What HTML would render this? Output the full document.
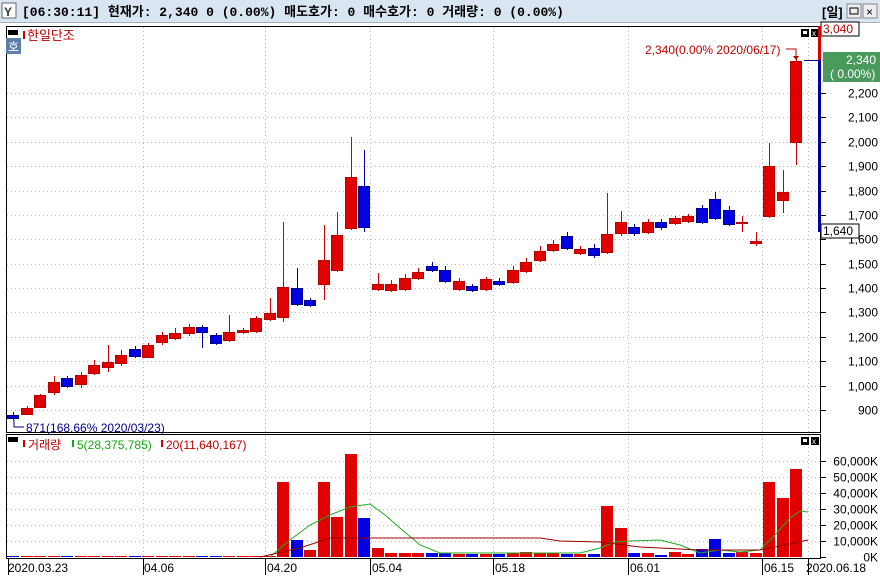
<!DOCTYPE html>
<html><head><meta charset="utf-8"><style>
body{margin:0;width:880px;height:578px;overflow:hidden;background:#fff;font-family:"Liberation Mono","Noto Sans CJK KR",monospace;}
svg text{font-family:"Liberation Sans","Noto Sans CJK KR",sans-serif;}
</style></head><body>
<svg id="s" width="880" height="578" xmlns="http://www.w3.org/2000/svg">
<rect x="0" y="0" width="880" height="22" fill="#d9e5f1"/>
<line x1="0" y1="22.5" x2="880" y2="22.5" stroke="#a0b0c0"/>
<rect x="2" y="3" width="14" height="15" fill="#fff" stroke="#666"/>
<text x="4" y="16" font-size="12" font-weight="bold" fill="#333">Y</text>
<text x="22" y="16" font-size="13" font-weight="bold" fill="#000" style="font-family:'Liberation Mono','Noto Sans CJK KR',monospace">[06:30:11] 현재가: 2,340  0  (0.00%)  매도호가: 0  매수호가: 0  거래량: 0  (0.00%)</text>
<text x="822" y="17" font-size="13" font-weight="bold" fill="#000">[일]</text>
<rect x="847" y="4" width="14" height="14" fill="#eee" stroke="#888"/><rect x="850" y="8" width="8" height="6" fill="none" stroke="#000"/>
<rect x="863" y="4" width="14" height="14" fill="#eee" stroke="#888"/><text x="866" y="16" font-size="12" fill="#000">×</text>
<g id="grid"></g>
<rect x="6.5" y="26.5" width="814" height="406" fill="none" stroke="#000"/>
<line x1="6" y1="434.5" x2="821" y2="434.5" stroke="#000"/>
<line x1="6.5" y1="434" x2="6.5" y2="558" stroke="#000"/>
<line x1="820.5" y1="434" x2="820.5" y2="558" stroke="#000"/>
<line x1="6" y1="558.5" x2="821" y2="558.5" stroke="#000"/>
<g id="c"></g>
<rect x="8" y="30" width="10" height="5" fill="#000"/>
<rect x="6" y="38" width="15" height="16" fill="#5a7fa8"/><text x="8" y="51" font-size="12" fill="#fff">호</text>
<rect x="23" y="31" width="2" height="8" fill="#c00"/><text x="27" y="40" font-size="13" fill="#b00">한일단조</text>
<rect x="801" y="29" width="8" height="8" fill="#000"/><rect x="803" y="31" width="4" height="3" fill="#fff"/>
<rect x="811" y="29" width="8" height="8" fill="#000"/><text x="812" y="36" font-size="8" fill="#fff">x</text>
<text x="645" y="54" font-size="12" fill="#b00">2,340(0.00% 2020/06/17)</text>
<path d="M786 49H796V58" stroke="#b00" fill="none"/><path d="M793 56L796 60L799 56Z" fill="#b00"/>
<text x="26" y="432" font-size="12" fill="#00008b">871(168.66% 2020/03/23)</text>
<path d="M14 420V427H24" stroke="#00008b" fill="none"/>
<rect x="8" y="437" width="10" height="5" fill="#000"/>
<rect x="23" y="440" width="2" height="7" fill="#c00"/><text x="28" y="449" font-size="12" fill="#b00">거래량</text>
<rect x="72" y="440" width="2" height="7" fill="#1a1"/><text x="77" y="449" font-size="12" fill="#1a1">5(28,375,785)</text>
<rect x="161" y="440" width="2" height="7" fill="#c00"/><text x="166" y="449" font-size="12" fill="#b00">20(11,640,167)</text>
<rect x="801" y="437" width="8" height="8" fill="#000"/><rect x="803" y="439" width="4" height="3" fill="#fff"/>
<rect x="811" y="437" width="8" height="8" fill="#000"/><text x="812" y="444" font-size="8" fill="#fff">x</text>
<g id="ax" font-size="12" fill="#000"></g>
<rect x="821" y="22" width="38" height="14" fill="#fff" stroke="#000"/><text x="823" y="33" font-size="12" fill="#b00">3,040</text>
<rect x="823" y="52" width="57" height="30" fill="#4a9a5e"/><path d="M822 60L830 55V66Z" fill="#4a9a5e"/>
<text x="846" y="64" font-size="12" fill="#fff">2,340</text><text x="830" y="78" font-size="12" fill="#fff">( 0.00%)</text>
<rect x="821" y="224" width="38" height="14" fill="#fff" stroke="#000"/><text x="823" y="235" font-size="12" fill="#000">1,640</text>
<rect x="818" y="26" width="3" height="34" fill="#d00"/><rect x="818" y="60" width="3" height="172" fill="#00a"/>
<line x1="804" y1="60.5" x2="818" y2="60.5" stroke="#00008b"/>
<g font-size="12" fill="#000">
<text x="8" y="572">2020.03.23</text><text x="144" y="572">04.06</text><text x="267" y="572">04.20</text><text x="372" y="572">05.04</text><text x="495" y="572">05.18</text><text x="630" y="572">06.01</text><text x="764" y="572">06.15</text><text x="806" y="572">2020.06.18</text>
</g>
</svg>
<script>
var NS="http://www.w3.org/2000/svg",c=document.getElementById('c'),g=document.getElementById('grid'),ax=document.getElementById('ax');
function el(p,t,a){var e=document.createElementNS(NS,t);for(var k in a)e.setAttribute(k,a[k]);p.appendChild(e);return e;}
var yp=function(p){return 93+(2200-p)*0.2438};
for(var p=900;p<=2200;p+=100){var y=Math.round(yp(p))+.5;el(g,'line',{x1:7,y1:y,x2:820,y2:y,stroke:'#bbb','stroke-dasharray':'1,3'});el(ax,'line',{x1:821,y1:y,x2:826,y2:y,stroke:'#000'});var t=el(ax,'text',{x:878,y:y+4,'text-anchor':'end'});t.textContent=p>=1000?(Math.floor(p/1000)+','+String(p%1000).padStart(3,'0')):p;}
for(var v=0;v<=60000;v+=10000){var y=Math.round(557-v*0.0016)+.5;if(v>0)el(g,'line',{x1:7,y1:y,x2:820,y2:y,stroke:'#bbb','stroke-dasharray':'1,3'});el(ax,'line',{x1:821,y1:y,x2:826,y2:y,stroke:'#000'});var t=el(ax,'text',{x:878,y:y+4,'text-anchor':'end'});t.textContent=v==0?'0K':(v/1000)+',000K';}
[143,265,370,493,628,762,808].forEach(function(x){el(g,'line',{x1:x+.5,y1:27,x2:x+.5,y2:557,stroke:'#bbb','stroke-dasharray':'1,3'});el(g,'line',{x1:x+.5,y1:559,x2:x+.5,y2:575,stroke:'#000'});});
el(g,'line',{x1:8.5,y1:559,x2:8.5,y2:575,stroke:'#000'});
var d=[[0,415,418,412,420],[1,408,414,406,415],[1,395,407,394,408],[1,382,392,376,395],[0,378,386,376,388],[1,375,384,372,388],[1,365,373,360,375],[1,362,367,345,372],[1,355,363,350,366],[0,349,356,346,358],[1,345,357,343,358],[1,335,342,332,345],[1,333,338,328,340],[1,327,333,324,336],[0,327,332,325,348],[0,335,343,333,345],[1,332,340,315,342],[1,330,332,328,334],[1,318,331,316,333],[1,313,319,298,321],[1,287,317,222,322],[0,288,304,268,306],[0,300,305,298,307],[1,260,284,225,300],[1,235,270,212,272],[1,177,228,137,230],[0,186,227,150,232],[1,284,289,273,291],[1,284,290,280,292],[1,278,289,274,291],[1,272,278,268,280],[0,266,270,262,272],[0,270,281,266,283],[1,281,289,278,291],[0,286,290,284,292],[1,279,289,277,291],[0,281,284,278,286],[1,270,282,266,284],[1,262,271,258,273],[1,251,260,246,262],[1,244,250,240,252],[0,236,248,232,250],[1,249,253,246,255],[0,248,255,244,258],[1,234,252,193,254],[1,222,233,211,236],[0,227,233,224,236],[1,222,232,219,234],[0,222,227,219,230],[1,218,223,216,225],[1,216,221,214,223],[0,208,222,205,224],[0,199,218,192,220],[0,210,224,206,226],[1,222,223,216,232],[1,241,243,232,246],[1,166,216,143,218],[1,192,200,170,213],[1,61,142,59,165]];
var vol=[556,556,556,556,556,556,556,556,556,556,556,556,556,556,556,556,556,556,556,556,482,540,550,482,517,454,518,548,553,553,553,553,553,554,554,554,554,553,552,553,553,554,554,554,506,528,553,553,555,552,554,549,539,553,552,553,482,498,469];
var volc=[0,1,1,1,0,1,1,1,1,0,1,1,1,1,0,0,1,1,1,1,1,0,1,1,1,1,0,1,1,1,1,0,0,1,0,1,0,1,1,1,1,0,1,0,1,1,0,1,0,1,1,0,0,0,1,1,1,1,1];
d.forEach(function(r,i){var x=Math.round(13+i*13.5);var col=r[0]?'#e00000':'#0000e0';
el(c,'line',{x1:x+.5,y1:r[3],x2:x+.5,y2:r[4],stroke:r[0]?'#c00':'#00a'});
el(c,'rect',{x:x-5.5,y:r[1]+.5,width:11,height:Math.max(1,r[2]-r[1]),fill:col,stroke:r[0]?'#b00':'#00008b'});
el(c,'rect',{x:x-6,y:vol[i],width:12,height:557-vol[i],fill:volc[i]?'#e00000':'#0000e0'});});
el(c,'polyline',{points:'270,557 290,540 310,525 330,515 350,507 370,504 385,515 400,528 420,545 440,553 460,553 540,553 560,553 580,553 600,548 615,542 630,541 660,540 680,545 700,553 720,550 740,552 760,550 775,535 790,518 800,511 808,512',fill:'none',stroke:'#2a2','stroke-width':1});
el(c,'polyline',{points:'260,557 300,548 330,538 360,538 540,538 560,541 600,542 640,547 700,550 760,550 780,546 808,540',fill:'none',stroke:'#900','stroke-width':1});
</script>
</body></html>
